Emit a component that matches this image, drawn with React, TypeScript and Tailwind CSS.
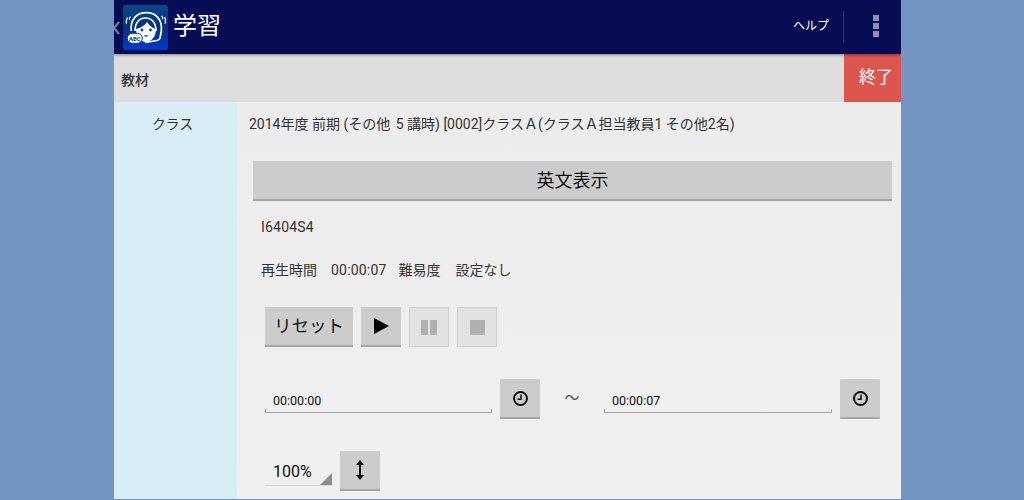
import React from 'react';

const font = { fontFamily: '"Roboto", "Noto Sans CJK JP", sans-serif' };

const ClockIcon = () => (
  <svg width="17" height="17" viewBox="0 0 17 17" fill="none" stroke="#111" strokeWidth="2">
    <circle cx="8.5" cy="8.5" r="6.5" />
    <path d="M9 4.5V9.2H5.5" strokeWidth="1.5" />
  </svg>
);

const ClockButton = () => (
  <button className="w-10 h-10 bg-[#cccccc] border-b-2 border-[#a6a6a6] rounded-[1px] flex items-center justify-center">
    <ClockIcon />
  </button>
);

const TimeField = ({ value, width }: { value: string; width: string }) => (
  <div className={`${width} h-[34px] flex flex-col justify-end`}>
    <div className="pl-2 text-[12.5px] leading-[16px] text-[#111]">{value}</div>
    <div className="h-[4px] border-b border-x border-[#a8a8a8]" />
  </div>
);

const Logo = () => (
  <svg width="45" height="45" viewBox="0 0 45 45" fill="none" stroke="#fff" strokeWidth="1.7">
    {/* headset */}
    <path d="M8.3 26C7 14 14 7.7 23.3 7.7S39.5 14 38.3 26" />
    <path d="M4.5 12.5C3.4 14.5 3 16.5 3.4 18.7M7.4 11.5C6.7 12.5 6.4 13.5 6.3 14.6M41.7 12C42.6 14 42.8 16.5 42.2 18.7M38.7 10.8C39.4 11.8 39.8 13 39.9 14.2" strokeWidth="1.2" />
    <path d="M38.3 26L37 33C36.6 34.5 35.5 35.3 34 35.5L22 37.5" />
    {/* hair and face */}
    <path d="M12 26C12 18 16 13 22.5 13S33 18 33 26" />
    <path d="M13 24C18 23 22 20 24 17C26 20 29 23 33 24C33 32 28 37 23 37S13 32 13 24Z" fill="#fff" stroke="none" />
    <circle cx="19" cy="25" r="1.4" fill="#0b3c8f" stroke="none" />
    <circle cx="27.5" cy="25" r="1.4" fill="#0b3c8f" stroke="none" />
    <path d="M21.5 30.5C22.500 31.300 23.700 31.300 24.700 30.500" stroke="#0b3c8f" strokeWidth="1.2" />
    {/* ABC bubble */}
    <rect x="4.300" y="28.300" width="15" height="10" rx="5" fill="#fff" stroke="#0a3a90" strokeWidth="1" />
    <text x="11.800" y="35.600" fontSize="6" fontWeight="700" textAnchor="middle" fill="#0b3c8f" stroke="none">ABC</text>
  </svg>
);

const App: React.FC = () => {
  return (
    <div className="w-[1024px] h-[500px] bg-[#7295c2] overflow-hidden pl-[114px]" style={font}>
      <div className="w-[787px] h-[499px] flex flex-col bg-[#eeeeee] overflow-hidden">
        {/* action bar */}
        <header className="h-[54px] shrink-0 bg-[#060d55] flex items-center shadow-[0_1px_3px_rgba(0,0,0,0.4)] z-10">
          <svg width="9" height="14" viewBox="0 0 9 14" fill="none" stroke="#7d7fa5" strokeWidth="2" className="shrink-0 mt-[1px]">
            <path d="M5 1L0 7L5 13" />
          </svg>
          <div className="w-[45px] h-[45px] rounded-[3px] bg-gradient-to-b from-[#0d4688] via-[#06307c] to-[#0338c8] shrink-0">
            <Logo />
          </div>
          <h1 className="ml-[5px] -mt-[3px] text-white text-[24px] leading-none">学習</h1>
          <div className="ml-auto flex items-center h-full">
            <span className="text-white text-[12px] mr-[14px] -mt-[3px]">ヘルプ</span>
            <div className="w-px h-[32px] bg-[#2d3270] -mt-[1px]" />
            <div className="w-[57px] pl-[7px] flex flex-col items-center gap-[2px] -mt-[2px]">
              <span className="w-[6px] h-[6px] bg-[#8d8fb0]" />
              <span className="w-[6px] h-[6px] bg-[#8d8fb0]" />
              <span className="w-[6px] h-[6px] bg-[#8d8fb0]" />
            </div>
          </div>
        </header>

        {/* material bar */}
        <div className="h-[48px] shrink-0 bg-[#dddddd] flex items-center justify-between">
          <span className="ml-[7px] mt-[4px] text-[14px] font-medium text-[#333]">教材</span>
          <span className="w-[57px] h-full bg-[#dd554f] text-white text-[17px] pl-[7px] flex items-center justify-center">終了</span>
        </div>

        <div className="flex-1 flex min-h-0">
          <aside className="w-[123px] shrink-0 bg-[#d8edf6] pt-[14px] pr-[6px] text-center text-[14px] leading-[16px] text-[#333]">
            クラス
          </aside>
          <main className="flex-1 text-[#333] bg-gradient-to-b from-[#ececec] to-[#f0f0f0]">
            <p className="ml-[12px] mt-[14px] text-[14px] leading-[16px]">
              2014年度 前期 (その他 <span className="ml-[2px]">5</span> 講時) [0002]クラスＡ(クラスＡ担当教員1 その他2名)
            </p>
            <div className="ml-[16px] mr-[9px] mt-[29px] h-[40px] bg-[#cccccc] border-b-2 border-[#a6a6a6] flex items-center justify-center text-[18px] text-[#111]">
              英文表示
            </div>
            <p className="ml-[24px] mt-[18px] text-[14px] leading-[16px] tracking-[0.2px]">I6404S4</p>
            <p className="ml-[24px] mt-[27px] text-[14px] leading-[16px] flex">
              <span>再生時間</span>
              <span className="ml-[14px] tracking-[0.2px]">00:00:07</span>
              <span className="ml-[12px]">難易度</span>
              <span className="ml-[15px]">設定なし</span>
            </p>

            <div className="ml-[28px] mt-[29px] flex items-center gap-2">
              <button className="w-[88px] h-[40px] bg-[#cccccc] border-b-2 border-[#a6a6a6] text-[17.5px] text-[#111]">リセット</button>
              <button className="w-10 h-10 bg-[#cccccc] border-b-2 border-[#a6a6a6] flex items-center justify-center pb-[1px]">
                <svg width="15" height="16" viewBox="0 0 15 16"><path d="M0 0L15 8L0 16Z" fill="#000" /></svg>
              </button>
              <button className="w-10 h-10 bg-[#e2e2e2] border border-[#cfcfcf] flex items-center justify-center gap-[2px]">
                <span className="w-[7px] h-[15px] bg-[#b0b0b0]" />
                <span className="w-[7px] h-[15px] bg-[#b0b0b0]" />
              </button>
              <button className="w-10 h-10 bg-[#e2e2e2] border border-[#cfcfcf] flex items-center justify-center">
                <span className="w-[15px] h-[15px] bg-[#b0b0b0]" />
              </button>
            </div>

            <div className="ml-[28px] mt-[32px] flex items-start">
              <TimeField value="00:00:00" width="w-[227px]" />
              <div className="ml-[8px]"><ClockButton /></div>
              <span className="w-[64px] text-center text-[15px] leading-[38px] text-[#555]">～</span>
              <TimeField value="00:00:07" width="w-[228px]" />
              <div className="ml-[8px]"><ClockButton /></div>
            </div>

            <div className="ml-[28px] mt-[32px] flex items-start">
              <div className="w-[67px] h-[35px] border-b border-[#d4d4d4] flex items-end justify-between">
                <span className="ml-[8px] text-[16px] leading-[26px] text-[#111]">100%</span>
                <svg width="12" height="12" viewBox="0 0 12 12"><path d="M12 0V12H0Z" fill="#8f8f8f" /></svg>
              </div>
              <button className="ml-[8px] w-10 h-10 bg-[#cccccc] border-b-2 border-[#a6a6a6] flex items-center justify-center">
                <svg width="10" height="20" viewBox="0 0 10 20" fill="#111">
                  <path d="M5 0L9 5H6V15H9L5 20L1 15H4V5H1Z" />
                </svg>
              </button>
            </div>
          </main>
        </div>
      </div>
    </div>
  );
};

export default App;
